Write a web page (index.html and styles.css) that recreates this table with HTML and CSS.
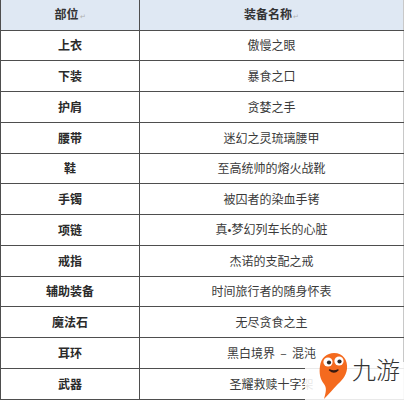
FILE: index.html
```html
<!DOCTYPE html>
<html lang="zh">
<head>
<meta charset="utf-8">
<link rel="stylesheet" href="styles.css">
</head>
<body>
<div class="page">
  <table class="tbl">
    <thead>
      <tr class="head">
        <th class="c1">部位<span class="pm">↵</span></th>
        <th class="c2">装备名称<span class="pm">↵</span></th>
      </tr>
    </thead>
    <tbody>
      <tr><td class="c1">上衣</td><td class="c2">傲慢之眼</td></tr>
      <tr><td class="c1">下装</td><td class="c2">暴食之口</td></tr>
      <tr><td class="c1">护肩</td><td class="c2">贪婪之手</td></tr>
      <tr><td class="c1">腰带</td><td class="c2">迷幻之灵琉璃腰甲</td></tr>
      <tr><td class="c1">鞋</td><td class="c2">至高统帅的熔火战靴</td></tr>
      <tr><td class="c1">手镯</td><td class="c2">被囚者的染血手铐</td></tr>
      <tr><td class="c1">项链</td><td class="c2">真<span class="dot">•</span>梦幻列车长的心脏</td></tr>
      <tr><td class="c1">戒指</td><td class="c2">杰诺的支配之戒</td></tr>
      <tr><td class="c1">辅助装备</td><td class="c2">时间旅行者的随身怀表</td></tr>
      <tr><td class="c1">魔法石</td><td class="c2">无尽贪食之主</td></tr>
      <tr><td class="c1">耳环</td><td class="c2">黑白境界 &nbsp;–&nbsp; 混沌</td></tr>
      <tr><td class="c1">武器</td><td class="c2">圣耀救赎十字架</td></tr>
    </tbody>
  </table>
  <div class="mark">
    <svg class="mascot" width="32" height="50" viewBox="0 0 32 50">
      <path d="M16 2 C25 2 30 9 29 18 C28 26 23 30 19 34 C15 38 11 43 6 48 C8 41 9 37 6 33 C2 28 1 22 2 15 C3 7 9 2 16 2 Z" fill="#f46a1e"/>
      <circle cx="10" cy="11" r="4.6" fill="#fff"/>
      <circle cx="21" cy="10" r="4.6" fill="#fff"/>
      <circle cx="11" cy="11.5" r="2.1" fill="#2a2a2a"/>
      <circle cx="21.5" cy="10.5" r="2.1" fill="#2a2a2a"/>
      <path d="M11.5 19 Q16 23 20 19 Q16 21 11.5 19 Z" fill="#3a1a10" stroke="#3a1a10" stroke-width="1.4" stroke-linejoin="round"/>
    </svg>
    <span class="brand">九游</span>
  </div>
</div>
</body>
</html>
```

FILE: styles.css
```css
html, body {
  margin: 0;
  padding: 0;
  background: #ffffff;
}
.page {
  position: relative;
  width: 405px;
  height: 400px;
  overflow: hidden;
  font-family: "Noto Sans CJK SC", "Noto Sans", sans-serif;
}
.tbl {
  width: 404px;
  border-collapse: collapse;
  table-layout: fixed;
  border-top: none;
  border-left: 1px solid #4a4a4a;
  border-right: 1px solid #c8c8c8;
}
.tbl th,
.tbl td {
  border: 1px solid #4e4e4e;
  padding: 0;
  text-align: center;
  vertical-align: middle;
  font-size: 12px;
  line-height: 14px;
}
.tbl th {
  border-top: none;
  background: #dfe8f3;
  color: #333;
  font-weight: 700;
}
.tbl .head {
  height: 30px;
}
.tbl tbody tr {
  height: 30.75px;
}
.tbl .c1 {
  width: 138px;
}
.tbl td.c1 {
  font-weight: 700;
  color: #2a2a2a;
}
.tbl td.c2 {
  color: #3a3a3a;
}
.tbl td:last-child,
.tbl th:last-child {
  border-right: 1px solid #c8c8c8;
}
.dot {
  font-family: "Liberation Sans", sans-serif;
  font-size: 11px;
  margin: 0;
}
.pm {
  font-size: 7px;
  color: #b0b0b0;
  font-weight: 400;
  margin-left: 1px;
}
.mark {
  position: absolute;
  left: 305px;
  top: 362px;
  width: 100px;
  height: 38px;
  background: rgba(255, 255, 255, 0.88);
}
.mascot {
  position: absolute;
  left: 13px;
  top: -11px;
}
.brand {
  position: absolute;
  left: 47px;
  top: -8px;
  font-size: 24px;
  line-height: 30px;
  color: #333;
  font-weight: 300;
}
```
